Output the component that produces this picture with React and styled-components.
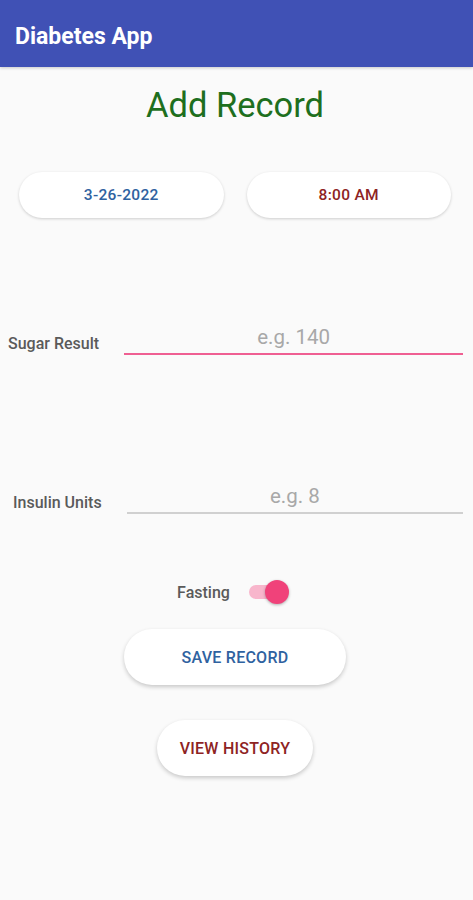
import styled, { createGlobalStyle } from "styled-components";
import { useState } from "react";

const GlobalStyle = createGlobalStyle`
  body {
    margin: 0;
    background: #fafafa;
    font-family: Roboto, "Noto Sans", sans-serif;
  }
`;

const App = () => {
  const [fasting, setFasting] = useState(true);

  return (
    <>
      <GlobalStyle />
      <AppBar>Diabetes App</AppBar>
      <Page>
        <Title>Add Record</Title>

        <PickerRow>
          <Pill color="#2f62a0">3-26-2022</Pill>
          <Pill color="#8e2323">8:00 AM</Pill>
        </PickerRow>

        <FieldRow top={107} left={8}>
          <FieldLabel>Sugar Result</FieldLabel>
          <Field placeholder="e.g. 140" focused />
        </FieldRow>

        <FieldRow top={129} left={13}>
          <FieldLabel>Insulin Units</FieldLabel>
          <Field placeholder="e.g. 8" />
        </FieldRow>

        <SwitchRow>
          <SwitchLabel>Fasting</SwitchLabel>
          <Switch on={fasting} onClick={() => setFasting(!fasting)}>
            <Track on={fasting} />
            <Thumb on={fasting} />
          </Switch>
        </SwitchRow>

        <ActionButton color="#2f62a0" width={222} top={25}>
          Save Record
        </ActionButton>
        <ActionButton color="#8e2323" width={156} top={35}>
          View History
        </ActionButton>
      </Page>
    </>
  );
};

export default App;

const AppBar = styled.div`
  height: 67px;
  box-sizing: border-box;
  background: #4051b5;
  color: #fff;
  font-size: 23px;
  font-weight: 700;
  padding: 6px 0 0 15px;
  display: flex;
  align-items: center;
  box-shadow: 0 1px 3px rgba(0, 0, 0, 0.2);
`;

const Page = styled.div`
  min-height: 833px;
  display: flex;
  flex-direction: column;
  align-items: center;
  padding-right: 3px;
`;

const Title = styled.h1`
  margin: 18px 0 0;
  font-size: 34.5px;
  font-weight: 400;
  color: #1e6f1e;
  line-height: 40px;
`;

const PickerRow = styled.div`
  align-self: stretch;
  display: flex;
  gap: 23px;
  padding: 0 19px;
  margin-top: 47px;
`;

const Pill = styled.button`
  flex: 1;
  height: 46px;
  border: none;
  border-radius: 23px;
  background: #fff;
  box-shadow: 0 1px 3px rgba(0, 0, 0, 0.18);
  color: ${(p) => p.color};
  font-family: Roboto, sans-serif;
  font-size: 15.5px;
  font-weight: 500;
  letter-spacing: 0.3px;
`;

const FieldRow = styled.div`
  align-self: stretch;
  display: flex;
  align-items: flex-end;
  gap: 25px;
  padding: 0 7px 0 ${(p) => p.left}px;
  margin-top: ${(p) => p.top}px;
`;

const FieldLabel = styled.label`
  font-size: 16px;
  font-weight: 500;
  color: #5a5a5a;
  padding-bottom: 2px;
  white-space: nowrap;
`;

const Field = styled.input`
  flex: 1;
  min-width: 0;
  border: none;
  border-bottom: 2px solid ${(p) => (p.focused ? "#ef5f92" : "#d0d0d0")};
  background: transparent;
  font-family: Roboto, sans-serif;
  font-size: 20.5px;
  text-align: center;
  padding: 0 0 4px;
  outline: none;

  &::placeholder {
    color: #a8a8a8;
  }
`;

const SwitchRow = styled.div`
  display: flex;
  align-items: center;
  gap: 19px;
  margin-top: 66px;
  padding-right: 4px;
`;

const SwitchLabel = styled.span`
  font-size: 16px;
  font-weight: 500;
  color: #5a5a5a;
`;

const Switch = styled.div`
  position: relative;
  width: 40px;
  height: 24px;
  cursor: pointer;
`;

const Track = styled.div`
  position: absolute;
  left: 0;
  top: 5px;
  width: 36px;
  height: 14px;
  border-radius: 7px;
  background: ${(p) => (p.on ? "#f8b6cc" : "#bdbdbd")};
`;

const Thumb = styled.div`
  position: absolute;
  top: 0;
  left: ${(p) => (p.on ? "16px" : "-4px")};
  width: 24px;
  height: 24px;
  border-radius: 50%;
  background: ${(p) => (p.on ? "#f0427a" : "#f1f1f1")};
  box-shadow: 0 1px 3px rgba(0, 0, 0, 0.3);
`;

const ActionButton = styled.button`
  width: ${(p) => p.width}px;
  height: 56px;
  margin-top: ${(p) => p.top}px;
  border: none;
  border-radius: 28px;
  background: #fff;
  box-shadow: 0 2px 4px rgba(0, 0, 0, 0.2);
  color: ${(p) => p.color};
  font-family: Roboto, sans-serif;
  font-size: 16px;
  font-weight: 500;
  letter-spacing: 0.25px;
  text-transform: uppercase;
`;
